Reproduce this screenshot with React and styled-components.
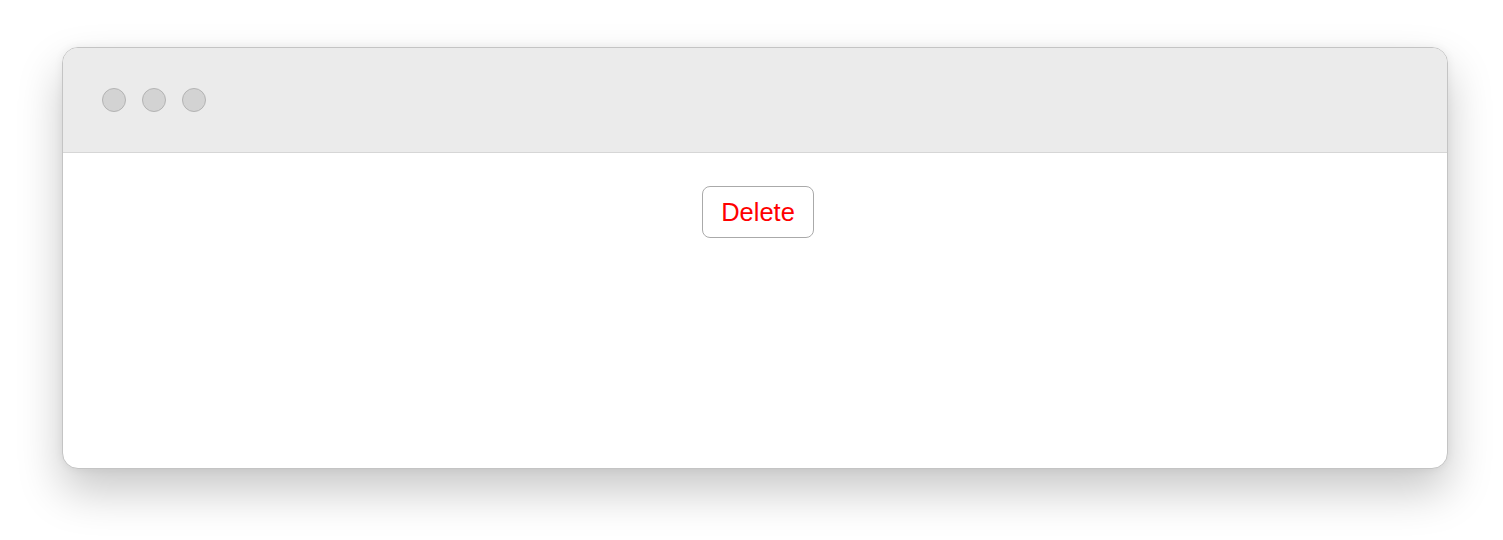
import styled, { createGlobalStyle } from "styled-components";

const GlobalStyle = createGlobalStyle`
    body {
        margin: 0;
        background: #ffffff;
        font-family: "Liberation Sans", Arial, sans-serif;
    }
`

const Page = styled.div`
    width: 1503px;
    height: 540px;
    padding: 47px 55px 0 62px;
    box-sizing: border-box;
`

const Window = styled.div`
    height: 422px;
    border-radius: 16px;
    border: 1px solid #c4c4c4;
    background: #ffffff;
    box-shadow: 0 22px 45px rgba(0, 0, 0, 0.22), 0 0 10px rgba(0, 0, 0, 0.06);
    overflow: hidden;
    box-sizing: border-box;
    display: flex;
    flex-direction: column;
`

const TitleBar = styled.div`
    height: 105px;
    background: #ebebeb;
    border-bottom: 1px solid #d6d6d6;
    display: flex;
    align-items: center;
    gap: 16px;
    padding-left: 39px;
    box-sizing: border-box;
    flex-shrink: 0;
`

const Dot = styled.span`
    width: 24px;
    height: 24px;
    border-radius: 50%;
    background: #d3d3d3;
    border: 1px solid #b3b3b3;
    box-sizing: border-box;
`

const Content = styled.div`
    flex: 1;
    display: flex;
    justify-content: center;
    align-items: flex-start;
    padding-top: 33px;
    padding-left: 6px;
`

const DeleteButton = styled.button`
    width: 112px;
    height: 52px;
    border-radius: 8px;
    border: 1px solid #aaaaaa;
    background: #ffffff;
    color: #ff0000;
    font-family: "Liberation Sans", Arial, sans-serif;
    font-size: 25.5px;
    padding: 0;
    cursor: pointer;
`

export default function App() {
    return (
        <>
            <GlobalStyle />
            <Page>
                <Window>
                    <TitleBar>
                        <Dot />
                        <Dot />
                        <Dot />
                    </TitleBar>
                    <Content>
                        <DeleteButton>Delete</DeleteButton>
                    </Content>
                </Window>
            </Page>
        </>
    )
}
